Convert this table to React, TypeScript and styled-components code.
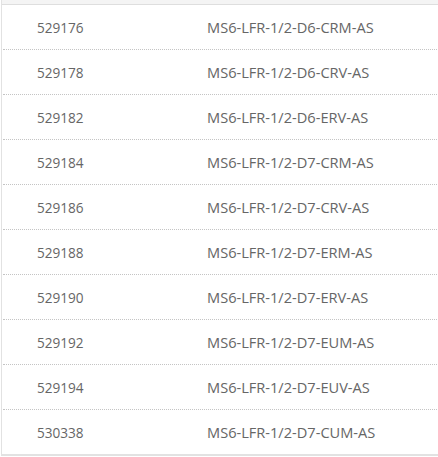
import React from "react";
import styled, { createGlobalStyle } from "styled-components";

const Global = createGlobalStyle`
  html, body { margin: 0; padding: 0; background: #fff; }
  body { font-family: "Open Sans", "Noto Sans", sans-serif; }
`;

const Table = styled.div`
  width: 437px;
  margin-left: 1px;
  border-left: 1px solid #e2e2e2;
  border-bottom: 2px solid #e2e2e2;
  background: #fff;
`;

const HeadStrip = styled.div`
  height: 4px;
  background: #f4f4f4;
  border-bottom: 1px solid #dedede;
`;

const Row = styled.div<{ $last?: boolean }>`
  display: grid;
  grid-template-columns: 204px 1fr;
  align-items: center;
  height: 44px;
  margin-left: 1px;
  border-bottom: ${(p) => (p.$last ? "none" : "1px dotted #c4c4c4")};
`;

const Cell = styled.div<{ $first?: boolean }>`
  padding-left: ${(p) => (p.$first ? "34px" : "0")};
  font-size: ${(p) => (p.$first ? "13.6px" : "14.6px")};
  color: #666;
  white-space: nowrap;
`;

const rows: [string, string][] = [
  ["529176", "MS6-LFR-1/2-D6-CRM-AS"],
  ["529178", "MS6-LFR-1/2-D6-CRV-AS"],
  ["529182", "MS6-LFR-1/2-D6-ERV-AS"],
  ["529184", "MS6-LFR-1/2-D7-CRM-AS"],
  ["529186", "MS6-LFR-1/2-D7-CRV-AS"],
  ["529188", "MS6-LFR-1/2-D7-ERM-AS"],
  ["529190", "MS6-LFR-1/2-D7-ERV-AS"],
  ["529192", "MS6-LFR-1/2-D7-EUM-AS"],
  ["529194", "MS6-LFR-1/2-D7-EUV-AS"],
  ["530338", "MS6-LFR-1/2-D7-CUM-AS"],
];

export default function App() {
  return (
    <>
      <Global />
      <Table>
        <HeadStrip />
        {rows.map(([a, b], i) => (
          <Row key={a} $last={i === rows.length - 1}>
            <Cell $first>{a}</Cell>
            <Cell>{b}</Cell>
          </Row>
        ))}
      </Table>
    </>
  );
}
